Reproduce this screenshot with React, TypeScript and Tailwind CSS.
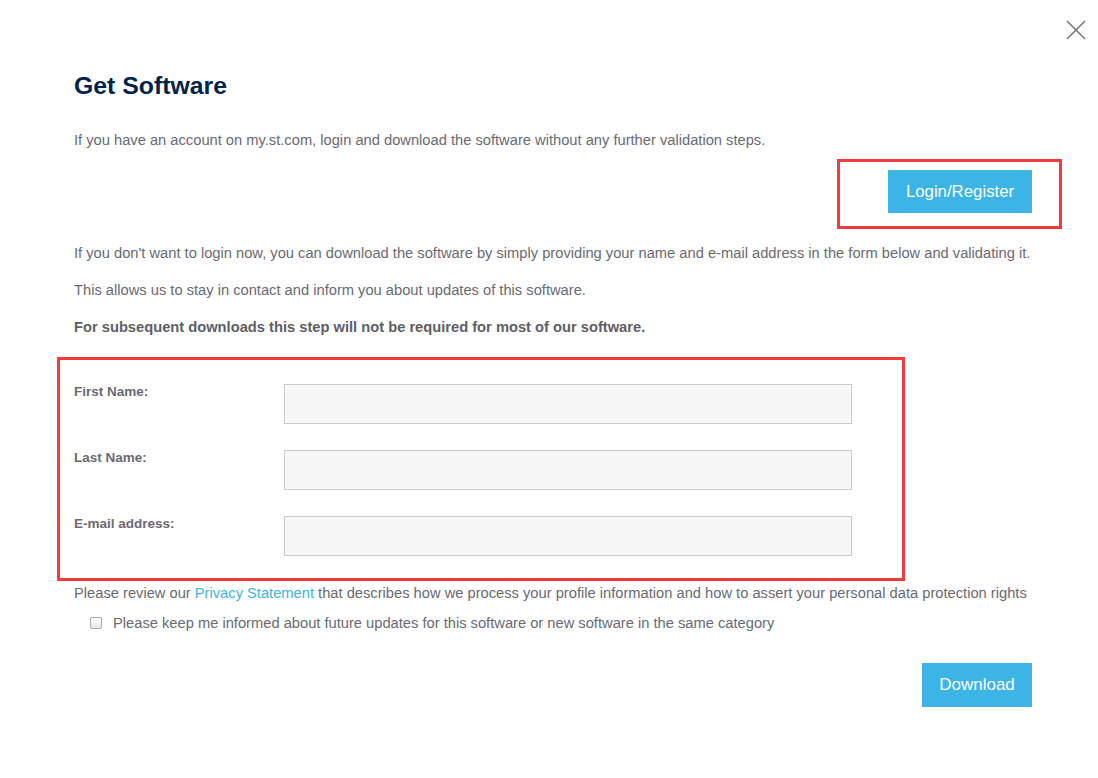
import React from 'react'

// Form rows shown in the validation box
const fields = [
  { id: 'first', label: 'First Name:' },
  { id: 'last', label: 'Last Name:' },
  { id: 'email', label: 'E-mail address:' },
]

function CloseIcon() {
  return (
    <svg width="22" height="22" viewBox="0 0 22 22" fill="none">
      <path d="M2 2L20 20M20 2L2 20" stroke="#76767e" strokeWidth="1.6" />
    </svg>
  )
}

export default function App() {
  return (
    <div
      className="relative w-full min-h-[778px] bg-white text-[#6a6a73]"
      style={{ fontFamily: '"Liberation Sans", Arial, sans-serif' }}
    >
      {/* close */}
      <button className="absolute top-[19px] right-[11px] p-0">
        <CloseIcon />
      </button>

      <div className="pl-[74px] pr-[66px] pt-[72px]">
        <h1 className="text-[24.8px] leading-[28px] font-bold text-[#03234b]">Get Software</h1>

        <p className="mt-[30px] text-[14.7px] leading-[20px]">
          If you have an account on my.st.com, login and download the software without any further validation steps.
        </p>

        {/* login */}
        <div className="flex justify-end mt-[9px]">
          <div className="-mr-[30px] border-[3px] border-[#f23b3b] pl-[48px] pr-[27px] pt-[8px] pb-[13px]">
            <button className="w-[144px] h-[43px] bg-[#3cb4e6] text-white text-[16.8px]">Login/Register</button>
          </div>
        </div>

        <p className="mt-[14px] text-[14.7px] leading-[20px]">
          If you don't want to login now, you can download the software by simply providing your name and e-mail address in the form below and validating it.
        </p>
        <p className="mt-[17px] text-[14.7px] leading-[20px]">
          This allows us to stay in contact and inform you about updates of this software.
        </p>
        <p className="mt-[17px] text-[14.7px] leading-[20px] font-bold text-[#5e5e67]">
          For subsequent downloads this step will not be required for most of our software.
        </p>

        {/* form */}
        <div className="-ml-[17px] mt-[20px] w-[848px] border-[3px] border-[#f23b3b] pl-[14px] pr-[50px] pt-[24px] pb-[22px] flex flex-col gap-[26px]">
          {fields.map((f) => (
            <div key={f.id} className="flex items-start">
              <label className="w-[210px] shrink-0 text-[13.5px] leading-[16px] font-bold">{f.label}</label>
              <input
                type="text"
                className="flex-1 h-[40px] bg-[#f7f7f7] border border-[#cccccc] outline-none"
              />
            </div>
          ))}
        </div>

        <p className="mt-[2px] text-[14.7px] leading-[20px]">
          Please review our <a className="text-[#3cb4e6]">Privacy Statement</a> that describes how we process your profile information and how to assert your personal data protection rights
        </p>

        <label className="flex items-center mt-[10px] ml-[16px] text-[14.7px] leading-[20px]">
          <span className="w-[12px] h-[12px] rounded-[2px] border border-[#a8a8ad] bg-gradient-to-b from-white to-[#e6e6e6] mr-[11px] mt-[-1px]" />
          Please keep me informed about future updates for this software or new software in the same category
        </label>

        <div className="flex justify-end mt-[30px]">
          <button className="w-[110px] h-[44px] bg-[#3cb4e6] text-white text-[17px]">Download</button>
        </div>
      </div>
    </div>
  )
}
